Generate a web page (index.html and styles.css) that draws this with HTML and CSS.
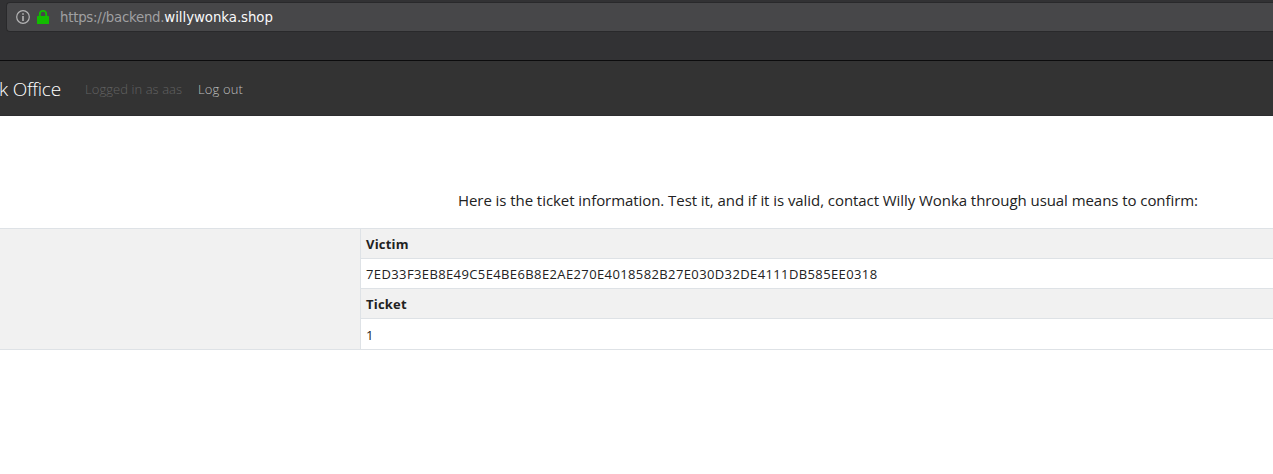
FILE: index.html
```html
<!DOCTYPE html>
<html lang="en">
<head>
<meta charset="utf-8">
<title>Back Office</title>
<link rel="stylesheet" href="styles.css">
</head>
<body>
<div class="browser-bar">
  <div class="address">
    <svg class="info" width="14" height="14" viewBox="0 0 14 14"><circle cx="7" cy="7" r="6.3" fill="none" stroke="#b4b4b5" stroke-width="1.2"/><path d="M6.2 3.2h1.6v1.6H6.2zM6.2 6h1.6v5H6.2z" fill="#b4b4b5"/></svg>
    <svg class="lock" width="12" height="14" viewBox="0 0 12 14"><path d="M2.8 7V4a3.2 3.2 0 0 1 6.4 0v3" fill="none" stroke="#12bc00" stroke-width="1.9"/><rect y="6" width="12" height="8" rx="0.6" fill="#12bc00"/></svg>
    <div class="url">https://backend.<span class="domain">willywonka.shop</span></div>
  </div>
</div>
<nav class="navbar">
  <div class="brand">k Office</div>
  <div class="user">Logged in as aas</div>
  <div class="logout">Log out</div>
</nav>
<main>
  <p class="message">Here is the ticket information. Test it, and if it is valid, contact Willy Wonka through usual means to confirm:</p>
  <div class="ticket">
    <div class="side"></div>
    <div class="rows">
      <div class="row head">Victim</div>
      <div class="row code">7ED33F3EB8E49C5E4BE6B8E2AE270E4018582B27E030D32DE4111DB585EE0318</div>
      <div class="row head">Ticket</div>
      <div class="row last">1</div>
    </div>
  </div>
</main>
</body>
</html>
```
FILE: styles.css
```css
* { box-sizing: border-box; }
body { margin: 0; height: 474px; overflow: hidden; background: #fff; color: #222; font-family: "Open Sans", sans-serif; }
.browser-bar { height: 61px; padding: 2px 0 0 6px; background: #323234; border-bottom: 1px solid #0c0c0d; }
.address { display: flex; align-items: center; height: 30px; padding-left: 9px; background: #474749; border: 1px solid #29292b; border-right: 0; border-radius: 4px 0 0 4px; }
.lock { margin-left: 7px; }
.url { margin-left: 11px; padding-top: 2px; font: 13.33px/20px "DejaVu Sans", sans-serif; letter-spacing: -0.25px; color: #a0a0a2; white-space: nowrap; }
.domain { letter-spacing: -0.05px; color: #f9f9fa; }
.navbar { display: flex; align-items: center; height: 55px; padding-top: 2px; background: #333; border-bottom: 1px solid #2d2d2f; font-weight: 300; white-space: nowrap; }
.brand { width: 86px; margin-left: -1px; font-size: 19px; letter-spacing: -0.25px; color: #fff; }
.user { width: 113px; font-size: 13px; letter-spacing: 0.06px; color: #626262; }
.logout { font-size: 13px; letter-spacing: 0.15px; color: #bdbdbd; }
.message { margin: 0; padding: 73px 0 0 458px; height: 112px; font-size: 15px; line-height: 23px; letter-spacing: -0.063px; white-space: nowrap; }
.ticket { display: flex; height: 122px; border: solid #dee2e6; border-width: 1px 0; }
.side { width: 361px; background: #f1f1f1; border-right: 1px solid #dee2e6; }
.rows { flex: 1; }
.row { height: 30px; padding: 5px 5px 0; font-size: 13px; line-height: 20px; border-bottom: 1px solid #dee2e6; }
.head { background: #f1f1f1; font-weight: 700; letter-spacing: 0.22px; }
.code { letter-spacing: 0.385px; }
.last { border: 0; padding-top: 6px; }
```
